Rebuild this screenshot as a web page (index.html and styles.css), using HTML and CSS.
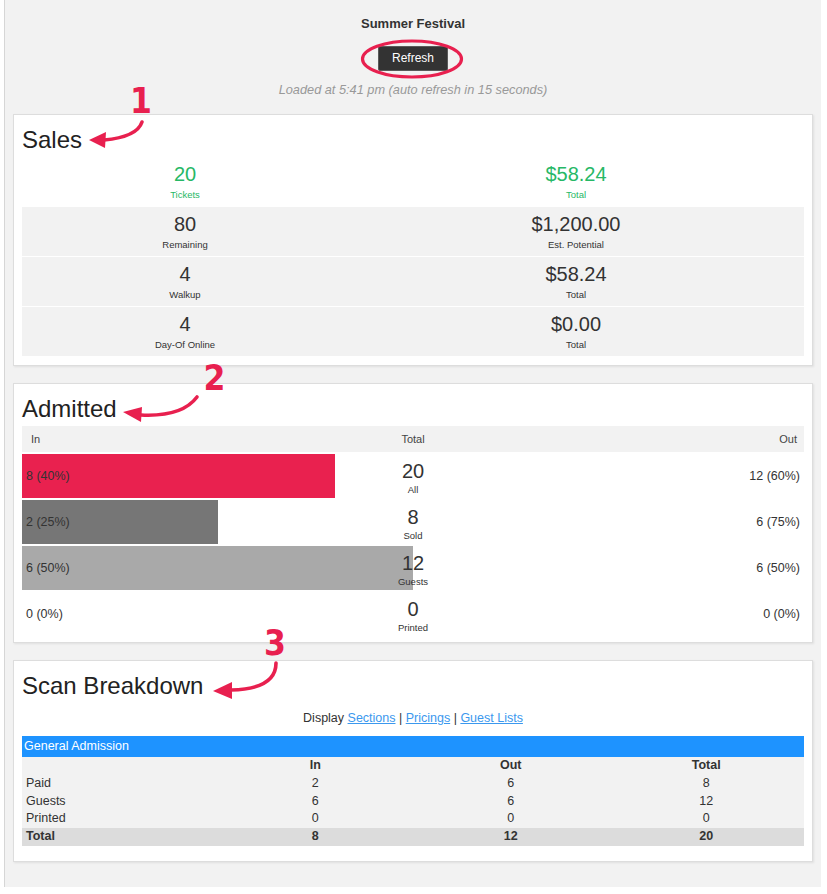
FILE: index.html
```html
<!DOCTYPE html>
<html lang="en">
<head>
<meta charset="utf-8">
<title>Summer Festival</title>
<link rel="stylesheet" href="styles.css">
</head>
<body>
<div class="page">
  <header class="top">
    <div class="event">Summer Festival</div>
    <button class="refresh" type="button">Refresh</button>
    <div class="loaded">Loaded at 5:41 pm (auto refresh in 15 seconds)</div>
  </header>

  <section class="card card-sales">
    <h2 class="card-title">Sales</h2>
    <div class="stat-row highlight">
      <div class="stat"><div class="num">20</div><div class="lbl">Tickets</div></div>
      <div class="stat"><div class="num">$58.24</div><div class="lbl">Total</div></div>
    </div>
    <div class="stat-row">
      <div class="stat"><div class="num">80</div><div class="lbl">Remaining</div></div>
      <div class="stat"><div class="num">$1,200.00</div><div class="lbl">Est. Potential</div></div>
    </div>
    <div class="stat-row">
      <div class="stat"><div class="num">4</div><div class="lbl">Walkup</div></div>
      <div class="stat"><div class="num">$58.24</div><div class="lbl">Total</div></div>
    </div>
    <div class="stat-row">
      <div class="stat"><div class="num">4</div><div class="lbl">Day-Of Online</div></div>
      <div class="stat"><div class="num">$0.00</div><div class="lbl">Total</div></div>
    </div>
  </section>

  <section class="card card-admitted">
    <h2 class="card-title">Admitted</h2>
    <div class="adm-head">
      <span class="h-in">In</span>
      <span class="h-tot">Total</span>
      <span class="h-out">Out</span>
    </div>
    <div class="adm-row">
      <div class="bar bar-red" style="width:40%"></div>
      <div class="in">8 (40%)</div>
      <div class="tot"><div class="num">20</div><div class="lbl">All</div></div>
      <div class="out">12 (60%)</div>
    </div>
    <div class="adm-row">
      <div class="bar bar-dark" style="width:25%"></div>
      <div class="in">2 (25%)</div>
      <div class="tot"><div class="num">8</div><div class="lbl">Sold</div></div>
      <div class="out">6 (75%)</div>
    </div>
    <div class="adm-row">
      <div class="bar bar-light" style="width:50%"></div>
      <div class="in">6 (50%)</div>
      <div class="tot"><div class="num">12</div><div class="lbl">Guests</div></div>
      <div class="out">6 (50%)</div>
    </div>
    <div class="adm-row">
      <div class="in">0 (0%)</div>
      <div class="tot"><div class="num">0</div><div class="lbl">Printed</div></div>
      <div class="out">0 (0%)</div>
    </div>
  </section>

  <section class="card card-scan">
    <h2 class="card-title">Scan Breakdown</h2>
    <p class="display">Display <a href="#">Sections</a> | <a href="#">Pricings</a> | <a href="#">Guest Lists</a></p>
    <table class="scan">
      <thead>
        <tr class="group"><th colspan="4">General Admission</th></tr>
        <tr class="cols"><th></th><th>In</th><th>Out</th><th>Total</th></tr>
      </thead>
      <tbody>
        <tr><td>Paid</td><td>2</td><td>6</td><td>8</td></tr>
        <tr><td>Guests</td><td>6</td><td>6</td><td>12</td></tr>
        <tr><td>Printed</td><td>0</td><td>0</td><td>0</td></tr>
        <tr class="total"><td>Total</td><td>8</td><td>12</td><td>20</td></tr>
      </tbody>
    </table>
  </section>
</div>

<svg class="marks" width="827" height="894" viewBox="0 0 827 894" aria-hidden="true">
  <ellipse cx="412" cy="59" rx="49.5" ry="18" fill="none" stroke="#e8204f" stroke-width="3.2"/>

  <text class="digit" x="141" y="113">1</text>
  <path d="M142 122 Q137 137 104 140" fill="none" stroke="#e8204f" stroke-width="3.6" stroke-linecap="round"/>
  <polygon points="89,140 106,132 105,148" fill="#e8204f"/>

  <text class="digit" x="214.5" y="390">2</text>
  <path d="M197 397 Q182 417 141 415" fill="none" stroke="#e8204f" stroke-width="3.6" stroke-linecap="round"/>
  <polygon points="123,412 142,407 141,422" fill="#e8204f"/>

  <text class="digit" x="275" y="655">3</text>
  <path d="M276 663 Q276 689 231 690" fill="none" stroke="#e8204f" stroke-width="3.6" stroke-linecap="round"/>
  <polygon points="213,691 232,682 232,699" fill="#e8204f"/>
</svg>
</body>
</html>
```

FILE: styles.css
```css
html, body {
  margin: 0;
  padding: 0;
}

body {
  position: relative;
  background: #ffffff;
  font-family: "Liberation Sans", Arial, Helvetica, sans-serif;
  color: #333333;
  width: 827px;
  min-height: 894px;
}

.page {
  margin-left: 4px;
  width: 817px;
  border-left: 1px solid #d6d6d6;
  background: #f2f2f2;
  padding: 16px 8px 25px;
  box-sizing: border-box;
}

/* header */
.top {
  display: flex;
  flex-direction: column;
  align-items: center;
}

.event {
  font-size: 13px;
  line-height: 16px;
  font-weight: bold;
  color: #333333;
}

.refresh {
  margin-top: 14px;
  background: #333333;
  color: #ffffff;
  border: 1px solid #5a5a5a;
  border-radius: 2px;
  font-family: "Liberation Sans", Arial, sans-serif;
  font-size: 12px;
  line-height: 15px;
  padding: 4px 13px;
}

.loaded {
  margin-top: 11px;
  font-size: 12.75px;
  line-height: 15px;
  font-style: italic;
  color: #999999;
}

/* cards */
.card {
  background: #ffffff;
  border: 1px solid #dddddd;
  box-shadow: 1px 1px 2px rgba(0, 0, 0, 0.08);
  padding: 12px 8px 9px;
  margin-top: 17px;
}

.card-admitted {
  padding-bottom: 6px;
}

.card-scan {
  margin-top: 17px;
  padding-bottom: 15px;
}

.card-title {
  margin: 0 0 4px;
  font-size: 24px;
  line-height: 26px;
  font-weight: normal;
  color: #222222;
}

.num {
  font-size: 20px;
  line-height: 22px;
  color: #333333;
}

.lbl {
  font-size: 9.5px;
  line-height: 12px;
  color: #333333;
}

/* sales */
.stat-row {
  display: grid;
  grid-template-columns: 326px 1fr;
  background: #f2f2f2;
  margin-top: 1px;
  height: 49px;
  box-sizing: border-box;
  padding-top: 6px;
}

.stat-row.highlight {
  background: #ffffff;
  margin-top: 0;
}

.stat-row.highlight .num,
.stat-row.highlight .lbl {
  color: #27b866;
}

.stat {
  text-align: center;
}

.stat .lbl {
  margin-top: 4px;
}

/* admitted */
.adm-head {
  display: grid;
  grid-template-columns: 1fr 90px 1fr;
  align-items: center;
  height: 26px;
  background: #f2f2f2;
  font-size: 11px;
  color: #444444;
}

.h-in {
  padding-left: 9px;
}

.h-tot {
  text-align: center;
}

.h-out {
  text-align: right;
  padding-right: 7px;
}

.adm-row {
  position: relative;
  display: grid;
  grid-template-columns: 1fr 90px 1fr;
  align-items: center;
  height: 44px;
  margin-top: 2px;
  font-size: 12.5px;
}

.bar {
  position: absolute;
  left: 0;
  top: 0;
  bottom: 0;
}

.bar-red { background: #e9214f; }
.bar-dark { background: #767676; }
.bar-light { background: #a9a9a9; }

.adm-row .in,
.adm-row .tot,
.adm-row .out {
  position: relative;
}

.adm-row .in {
  padding-left: 4px;
  color: #333333;
}

.adm-row .tot {
  text-align: center;
  align-self: start;
  padding-top: 6px;
}

.adm-row .tot .lbl {
  margin-top: 2px;
  line-height: 11px;
}

.adm-row .out {
  text-align: right;
  padding-right: 4px;
}

/* scan breakdown */
.display {
  margin: 12px 0 0;
  text-align: center;
  font-size: 12.5px;
  line-height: 15px;
  color: #333333;
}

.display a {
  color: #3b98ee;
  text-decoration: underline;
}

.scan {
  margin-top: 10px;
  width: 100%;
  border-collapse: collapse;
  table-layout: fixed;
  font-size: 12.5px;
  color: #333333;
}

.scan th,
.scan td {
  padding: 0;
  text-align: center;
  line-height: 17.75px;
  background: #f2f2f2;
}

.scan .group th {
  background: #1e93ff;
  color: #ffffff;
  text-align: left;
  font-weight: normal;
  line-height: 21px;
  padding-left: 2px;
}

.scan .cols th {
  font-weight: bold;
}

.scan td:first-child {
  text-align: left;
  padding-left: 4px;
}

.scan .total td {
  background: #dcdcdc;
  font-weight: bold;
}

/* annotations overlay */
.marks {
  position: absolute;
  left: 0;
  top: 0;
  pointer-events: none;
}

.digit {
  font-family: "Liberation Sans Narrow", "DejaVu Sans Condensed", "DejaVu Sans", sans-serif;
  font-stretch: condensed;
  font-weight: bold;
  font-size: 35px;
  fill: #e8204f;
  text-anchor: middle;
}
```
